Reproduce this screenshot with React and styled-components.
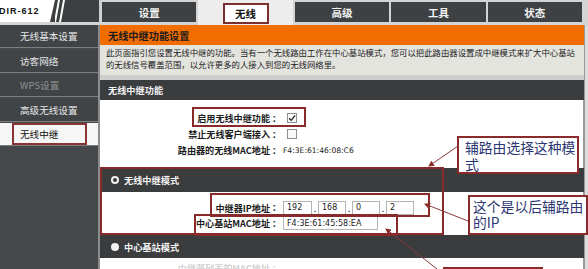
import styled, { createGlobalStyle } from "styled-components";

const GlobalStyle = createGlobalStyle`
  html, body { margin: 0; padding: 0; background: #45494b; }
  body { font-family: "Noto Sans CJK SC", "Noto Sans", sans-serif; }
  * { box-sizing: border-box; }
`;

const Page = styled.div`
  position: relative;
  width: 588px;
  height: 269px;
  overflow: hidden;
  background: #45494b;
`;

const TopBar = styled.div`
  display: flex;
  height: 25px;
  background: #d4d4d4;
`;

const Logo = styled.div`
  width: 101px;
  height: 22px;
  display: flex;
  align-items: stretch;
  background: #3d4042;
  border-right: 2px solid #cfcfcf;
`;

const LogoText = styled.span`
  width: 56px;
  background: #fff;
  clip-path: polygon(0 0, 100% 0, calc(100% - 5px) 100%, 0 100%);
  font-family: "Liberation Sans", Arial, sans-serif;
  font-weight: 700;
  font-size: 9px;
  letter-spacing: 1px;
  color: #111;
  display: flex;
  align-items: center;
  margin-left: -1px;
`;

const Tabs = styled.div`
  flex: 1;
  display: flex;
  gap: 2px;
  padding: 2px 6px 3px 1px;
`;

const Tab = styled.div`
  flex: 1;
  display: flex;
  align-items: center;
  justify-content: center;
  background: ${(p) => (p.$active ? "#ededed" : "#3d4143")};
  color: #f2f2f2;
  font-size: 10.5px;
  font-weight: 700;
  margin-top: ${(p) => (p.$active ? "-2px" : "0")};
  margin-bottom: ${(p) => (p.$active ? "-3px" : "0")};
  padding-top: ${(p) => (p.$active ? "1px" : "0")};
`;

const ActiveTabBox = styled.span`
  display: flex;
  align-items: center;
  justify-content: center;
  width: 46px;
  height: 21px;
  background: #fff;
  border: 2px solid #7c2f2f;
  color: #111;
`;

const Body = styled.div`
  display: flex;
  height: 244px;
`;

const Sidebar = styled.div`
  width: 100px;
  flex-shrink: 0;
  display: flex;
  flex-direction: column;
  gap: 2.5px;
  background: #45494b;
  border-right: 2px solid #8a8c8d;
`;

const SideItem = styled.div`
  height: 22px;
  flex-shrink: 0;
  display: flex;
  align-items: center;
  padding-left: 20px;
  font-size: 9.6px;
  background: ${(p) => (p.$active ? "#f6f6f6" : "#404446")};
  color: ${(p) => (p.$disabled ? "#8f9293" : p.$active ? "#111" : "#e6e6e6")};
  box-shadow: 0 1px 0 #7c7f80;
`;

const ActiveMark = styled.span`
  display: flex;
  align-items: center;
  margin-left: -8px;
  padding-left: 6px;
  width: 75px;
  height: 22px;
  border: 2px solid #8a3434;
`;

const Main = styled.div`
  flex: 1;
  display: flex;
  flex-direction: column;
  overflow: hidden;
  background: #fff;
  & > * {
    flex-shrink: 0;
  }
`;

const RightEdge = styled.div`
  width: 4px;
  flex-shrink: 0;
  background: #dcdcdc;
  border-left: 1px solid #9a9a9a;
`;

const TitleBar = styled.div`
  height: 20px;
  background: #f26d00;
  display: flex;
  align-items: center;
  padding-left: 8px;
  font-size: 10.2px;
  font-weight: 700;
  color: #1b1b1b;
`;

const Desc = styled.div`
  height: 35px;
  background: #e4e4df;
  padding: 1px 6px 0;
  font-size: 8.4px;
  line-height: 12px;
  color: #222;
  white-space: nowrap;
  border-bottom: 5px solid #cdcdcd;
`;

const SectionHead = styled.div`
  height: ${(p) => p.$h || 20}px;
  background: #3a3c3d;
  display: flex;
  align-items: center;
  gap: 5px;
  padding-left: ${(p) => (p.$radio ? 11 : 8)}px;
  color: #f4f4f4;
  font-size: 9.2px;
  font-weight: 700;
`;

const Radio = styled.span`
  width: 8px;
  height: 8px;
  border-radius: 50%;
  background: ${(p) => (p.$checked ? "#3a3c3d" : "#f2f2f2")};
  border: ${(p) => (p.$checked ? "2.5px solid #f2f2f2" : "none")};
`;

const FormBody = styled.div`
  height: ${(p) => p.$h}px;
  padding-top: ${(p) => p.$pt}px;
  background: #fff;
  border-right: 1px solid #9a9a9a;
`;

const FormRow = styled.div`
  display: grid;
  grid-template-columns: 170px 13px 1fr;
  align-items: center;
  height: 16px;
  color: ${(p) => (p.$faint ? "#d4d4d4" : "#1c1c1c")};
`;

const Label = styled.span`
  text-align: right;
  font-size: 9.1px;
  font-weight: 700;
  white-space: nowrap;
`;

const Colon = styled.span`
  text-align: center;
  font-size: 9px;
  font-weight: 700;
`;

const Value = styled.span`
  font-family: "DejaVu Sans", sans-serif;
  font-size: 7.6px;
  color: #222;
`;

const Check = styled.span`
  width: 10px;
  height: 10px;
  margin-left: 4px;
  border: 1px solid #8e8e8e;
  background: #f8f8f8;
  display: flex;
  align-items: center;
  justify-content: center;
`;

const Inputs = styled.div`
  display: flex;
  align-items: center;
`;

const Field = styled.span`
  width: ${(p) => p.$w}px;
  height: 14px;
  border: 1px solid #b4b4b4;
  background: #fff;
  padding-left: 3px;
  display: flex;
  align-items: center;
  font-family: "DejaVu Sans", sans-serif;
  font-size: 8px;
  color: #222;
`;

const Dot = styled.span`
  width: 6px;
  text-align: center;
  font-size: 9px;
  line-height: 14px;
  padding-top: 3px;
`;

const Mark = styled.div`
  position: absolute;
  left: ${(p) => p.$x}px;
  top: ${(p) => p.$y}px;
  width: ${(p) => p.$w}px;
  height: ${(p) => p.$h}px;
  border: 2px solid #8a2b2b;
  pointer-events: none;
`;

const Note = styled(Mark)`
  background: #fff;
  overflow: hidden;
  padding: 1px 0 0 ${(p) => p.$pl || 5}px;
  font-size: 13.8px;
  line-height: ${(p) => p.$lh || 17}px;
  color: #2b3672;
  white-space: nowrap;
`;

const Arrows = styled.svg`
  position: absolute;
  left: 0;
  top: 0;
  pointer-events: none;
`;

const sideItems = ["无线基本设置", "访客网络", "WPS设置", "高级无线设置"];

export default function App() {
  return (
    <>
      <GlobalStyle />
      <Page>
        <TopBar>
          <Logo>
            <LogoText>DIR-612</LogoText>
            <svg width="14" height="22" viewBox="0 0 14 22">
              <polygon points="3,0 5,0 1,22 -1,22" fill="#fff" />
              <polygon points="8,0 10,0 6,22 4,22" fill="#fff" />
            </svg>
          </Logo>
          <Tabs>
            <Tab>设置</Tab>
            <Tab $active>
              <ActiveTabBox>无线</ActiveTabBox>
            </Tab>
            <Tab>高级</Tab>
            <Tab>工具</Tab>
            <Tab>状态</Tab>
          </Tabs>
        </TopBar>
        <Body>
          <Sidebar>
            {sideItems.map((t) => (
              <SideItem key={t} $disabled={t === "WPS设置"}>
                {t}
              </SideItem>
            ))}
            <SideItem $active>
              <ActiveMark>无线中继</ActiveMark>
            </SideItem>
          </Sidebar>
          <Main>
            <TitleBar>无线中继功能设置</TitleBar>
            <Desc>
              此页面指引您设置无线中继的功能。当有一个无线路由工作在中心基站模式，您可以把此路由器设置成中继模式来扩大中心基站
              <br />
              的无线信号覆盖范围，以允许更多的人接入到您的无线网络里。
            </Desc>
            <SectionHead>无线中继功能</SectionHead>
            <FormBody $h={68} $pt={10}>
              <FormRow>
                <Label>启用无线中继功能</Label>
                <Colon>：</Colon>
                <Check>
                  <svg width="8" height="8" viewBox="0 0 8 8">
                    <path d="M1 4.2 L3.2 6.3 L7 1.5" stroke="#2a2a2a" strokeWidth="1.3" fill="none" />
                  </svg>
                </Check>
              </FormRow>
              <FormRow>
                <Label>禁止无线客户端接入</Label>
                <Colon>：</Colon>
                <Check />
              </FormRow>
              <FormRow>
                <Label>路由器的无线MAC地址</Label>
                <Colon>：</Colon>
                <Value>F4:3E:61:46:08:C6</Value>
              </FormRow>
            </FormBody>
            <SectionHead $radio $h={24}>
              <Radio $checked />
              无线中继模式
            </SectionHead>
            <FormBody $h={43} $pt={7}>
              <FormRow>
                <Label>中继器IP地址</Label>
                <Colon>：</Colon>
                <Inputs>
                  <Field $w={29}>192</Field>
                  <Dot>.</Dot>
                  <Field $w={28}>168</Field>
                  <Dot>.</Dot>
                  <Field $w={28}>0</Field>
                  <Dot>.</Dot>
                  <Field $w={28}>2</Field>
                </Inputs>
              </FormRow>
              <FormRow>
                <Label>中心基站MAC地址</Label>
                <Colon>：</Colon>
                <Inputs>
                  <Field $w={95}>F4:3E:61:45:58:EA</Field>
                </Inputs>
              </FormRow>
            </FormBody>
            <SectionHead $radio $h={23}>
              <Radio />
              中心基站模式
            </SectionHead>
            <FormBody $h={20} $pt={2}>
              <FormRow $faint>
                <Label>中继器列表的MAC地址</Label>
                <Colon>：</Colon>
              </FormRow>
            </FormBody>
          </Main>
          <RightEdge />
        </Body>

        <Mark $x={192} $y={107} $w={114} $h={20} />
        <Mark $x={100} $y={167} $w={344} $h={68} />
        <Mark $x={210} $y={193} $w={220} $h={24} />
        <Mark $x={194} $y={214} $w={204} $h={22} />
        <Note $x={457} $y={136} $w={122} $h={38} $pl={6}>
          辅路由选择这种模
          <br />式
        </Note>
        <Note $x={468} $y={195} $w={120} $h={40} $pl={3} $lh={16}>
          这个是以后辅路由
          <br />的IP
        </Note>
        <Note $x={443} $y={267} $w={100} $h={20} />
        <Arrows width="588" height="269" viewBox="0 0 588 269">
          <defs>
            <marker id="ah" markerWidth="6" markerHeight="6" refX="5" refY="3" orient="auto">
              <path d="M0 0 L6 3 L0 6 Z" fill="#8a2b2b" />
            </marker>
          </defs>
          <g stroke="#8a3a3a" strokeWidth="1" fill="none">
            <line x1="458" y1="146" x2="429" y2="166" markerEnd="url(#ah)" />
            <line x1="468" y1="221" x2="425" y2="204" markerEnd="url(#ah)" />
            <line x1="437" y1="269" x2="386" y2="229" markerEnd="url(#ah)" />
          </g>
        </Arrows>
      </Page>
    </>
  );
}
